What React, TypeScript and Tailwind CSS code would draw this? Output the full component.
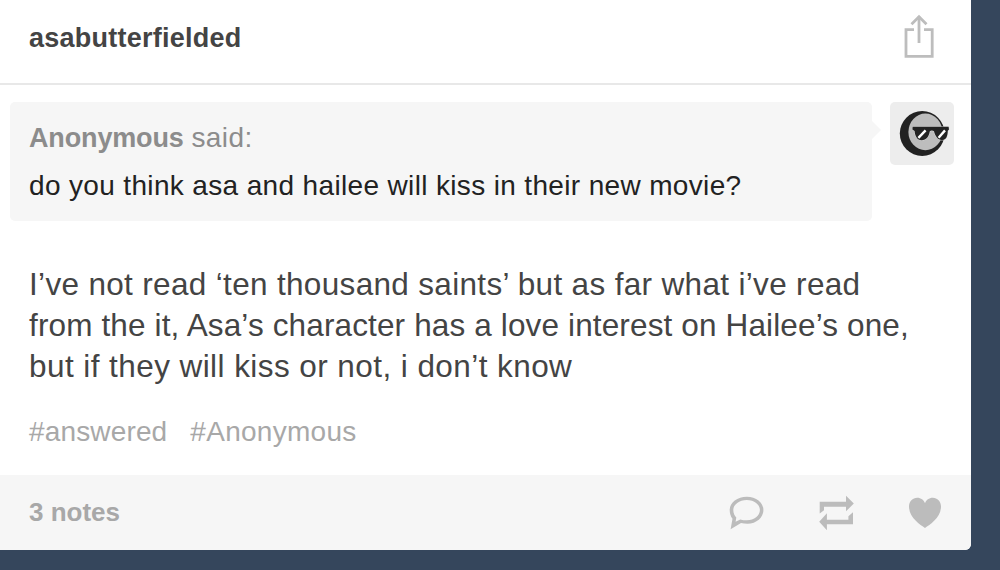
type IconProps = {
  className?: string;
};

type TextRun = {
  text: string;
  className: string;
};

type Post = {
  blog: string;
  asker: string;
  question: string;
  answer: TextRun[];
  tags: TextRun[];
  notes: number;
};

const post: Post = {
  blog: "asabutterfielded",
  asker: "Anonymous",
  question: "do you think asa and hailee will kiss in their new movie?",
  answer: [
    { text: "I’ve not read ‘ten thousand saints’ but as far what i’ve read", className: "tracking-[0.33px]" },
    { text: "from the it, Asa’s character has a love interest on Hailee’s one,", className: "tracking-[0.14px]" },
    { text: "but if they will kiss or not, i don’t know", className: "tracking-[0.43px]" },
  ],
  tags: [
    { text: "#answered", className: "tracking-[0.15px]" },
    { text: "#Anonymous", className: "tracking-[0.28px]" },
  ],
  notes: 3,
};

function ShareIcon({ className }: IconProps) {
  return (
    <svg viewBox="0 0 30 44" className={className} fill="none" stroke="currentColor" strokeWidth="2.8">
      <path d="M10 15.6H2V42.4H28.2V15.6H20" />
      <path d="M15 29V2.5" />
      <path d="M7.5 10.2L15 2.8L22.5 10.2" />
    </svg>
  );
}

function ReplyIcon({ className }: IconProps) {
  return (
    <svg viewBox="0 0 34 33" className={className} fill="currentColor" fillRule="evenodd">
      <path d="M16.8 0.7C26 0.7 33.4 6.5 33.4 14C33.4 21.6 26.5 27.7 17.5 27.7C15.3 27.7 13 27.4 11 26.9L0.6 33.2L2.5 22.8C0.7 20.5 -0.3 17.5 -0.3 14C-0.3 6.5 7.5 0.7 16.8 0.7ZM16.8 4.1C9.3 4.1 3.3 8.6 3.3 14C3.3 17.1 4.5 19.6 6.3 21.4L5.6 25.8L10.3 23.4C12.3 24 14.5 24.3 16.8 24.3C24.3 24.3 29.9 19.6 29.9 14C29.9 8.6 24.3 4.1 16.8 4.1Z" />
    </svg>
  );
}

function ReblogIcon({ className }: IconProps) {
  return (
    <svg viewBox="0 0 35 35" className={className} fill="currentColor">
      <path d="M0.7 6.7H27V0.7L34.8 8.5L27 16.3V11.7H5V15.3L0.7 18.6Z" />
      <path d="M34 29.3H7.9V35.3L0.2 26.8L7.9 18.3V24.7H29.4V21.3L34 17.3Z" />
    </svg>
  );
}

function HeartIcon({ className }: IconProps) {
  return (
    <svg viewBox="0 0 32 31" className={className} fill="currentColor">
      <path d="M16 31C11 27.5 0 20.5 0 9.5C0 4.2 3.7 0.7 8.2 0.7C12 0.7 14.8 3 16 6.2C17.2 3 20 0.7 23.8 0.7C28.3 0.7 32 4.2 32 9.5C32 20.5 21 27.5 16 31Z" />
    </svg>
  );
}

function Avatar() {
  return (
    <svg viewBox="0 0 64 63" className="h-[63px] w-16 shrink-0 rounded-[5px] bg-[#ededed]">
      <circle cx="32.2" cy="31.5" r="22.4" fill="#222" />
      <ellipse cx="35.4" cy="29.9" rx="17" ry="18.3" fill="#bdbdbd" />
      {/* sunglasses */}
      <path
        d="M22.6 24.8H58.6L59 27.4L57.8 28.8C57.6 34.4 56.4 38 52 38C47.6 38 45.2 34 44 29.3C43 28.3 40.6 28.3 39.8 29.3C38.8 34.6 36.4 38.2 31.6 38.2C27.2 38.2 25.2 34.4 24.6 29L22.4 27.6Z"
        fill="#222"
        stroke="#dedede"
        strokeWidth="0.8"
        paintOrder="stroke"
      />
      <path d="M28.4 35.8L35.6 28.4" stroke="#fff" strokeWidth="2.4" />
      <path d="M48.6 35.8L55 28.4" stroke="#fff" strokeWidth="2.4" />
    </svg>
  );
}

export default function App() {
  return (
    <div className="h-[570px] w-[1000px] overflow-hidden bg-[#35465c] font-['Liberation_Sans',Arial,sans-serif]">
      <article className="flex h-[550px] w-[971px] flex-col overflow-hidden rounded-br-[6px] bg-white">
        <header className="flex h-[85px] shrink-0 items-center justify-between border-b-2 border-[#e8e8e8] pr-[37px] pb-1.5 pl-[29px]">
          <h1 className="text-[27px] font-bold tracking-[0.25px] text-[#444]">{post.blog}</h1>
          <ShareIcon className="mb-[5px] h-11 w-[30px] text-[#bdbdbd]" />
        </header>

        <section className="flex pt-[17px] pl-[10px]">
          <div className="h-[119px] w-[862px] rounded-[5px] bg-[#f6f6f6] pt-3 pl-[19px] text-[28px] leading-[48px] whitespace-nowrap">
            <p className="text-[#8c8c8c]">
              <span className="text-[27px] font-bold tracking-[-0.15px]">{post.asker}</span>{" "}
              <span className="tracking-[0.4px]">said:</span>
            </p>
            <p className="tracking-[0.35px] text-[#222]">{post.question}</p>
          </div>
          <svg viewBox="0 0 9 18" className="mt-[19px] mr-[9px] h-[18px] w-[9px] text-[#f6f6f6]" fill="currentColor">
            <path d="M0 0L9 9L0 18Z" />
          </svg>
          <Avatar />
        </section>

        <div className="mt-[43px] pl-[29px] text-[31.5px] leading-[41px] whitespace-nowrap text-[#444]">
          {post.answer.map((line) => (
            <p key={line.text} className={line.className}>
              {line.text}
            </p>
          ))}
        </div>

        <ul className="mt-[25px] flex gap-[23px] pl-[29px] text-[28px] leading-10 text-[#a8a8a8]">
          {post.tags.map((tag) => (
            <li key={tag.text} className={tag.className}>
              {tag.text}
            </li>
          ))}
        </ul>

        <footer className="mt-auto flex h-[75px] shrink-0 items-center justify-between bg-[#f6f6f6] pr-[30px] pl-[29px] text-[#bcbcbc]">
          <span className="text-[26px] font-bold text-[#a8a8a8]">{post.notes} notes</span>
          <div className="flex items-center">
            <ReplyIcon className="mr-[55px] h-[33px] w-[34px] overflow-visible" />
            <ReblogIcon className="mr-[55px] size-[35px] overflow-visible" />
            <HeartIcon className="h-[31px] w-8" />
          </div>
        </footer>
      </article>
    </div>
  );
}
